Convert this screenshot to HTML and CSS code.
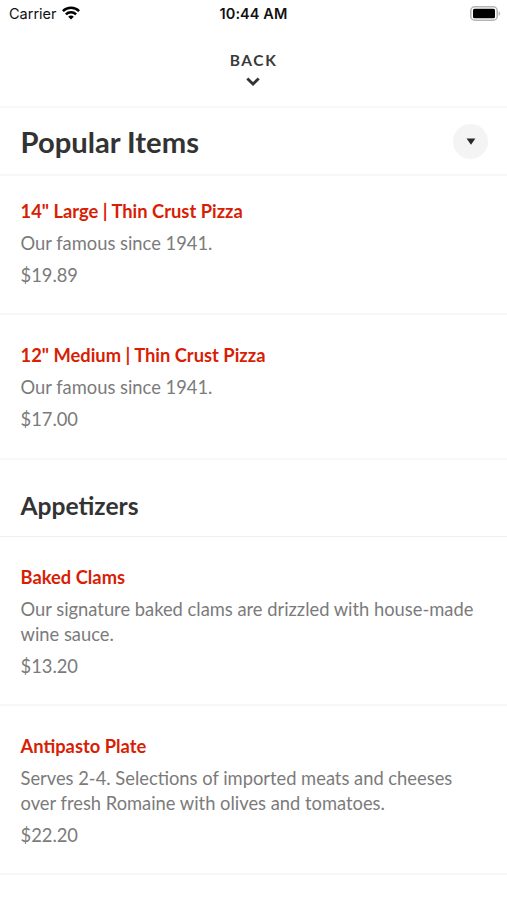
FILE: index.html
```html
<!DOCTYPE html>
<html lang="en">
<head>
    <meta charset="UTF-8">
    <meta name="viewport" content="width=device-width, initial-scale=1.0">
    <title>Menu</title>
    <link rel="stylesheet" href="styles.css">
</head>
<body>

<!-- Status Bar -->
<div class="status-bar">
    <div class="carrier">
        <span>Carrier</span>
        <svg class="wifi" width="18" height="14" viewBox="0 0 18 14">
            <g fill="none" stroke="#000" stroke-width="2.5">
                <path d="M0.9 5.2C5.4 0.7 12.6 0.7 17.1 5.2"/>
                <path d="M3.9 8.4C6.7 5.6 11.3 5.6 14.1 8.4"/>
            </g>
            <path d="M9 13.6L6.2 10.7C7.8 9.2 10.2 9.2 11.8 10.7Z"/>
        </svg>
    </div>
    <span class="time">10:44 AM</span>
    <svg class="battery" width="31" height="15" viewBox="0 0 31 15">
        <rect x="0.8" y="0.8" width="26.4" height="13.4" rx="4" fill="#fff" stroke="#b5b5b5" stroke-width="1.6"/>
        <rect x="3" y="2.8" width="22" height="9.4" rx="1.5"/>
        <path d="M28.6 5.2C30.7 6 30.7 9 28.6 9.8Z" fill="#b5b5b5"/>
    </svg>
</div>

<header>
    <a href="#" class="back">BACK
        <svg width="16" height="11" viewBox="0 0 16 11">
            <path d="M2.3 2.5L8 8L13.7 2.5" fill="none" stroke="#333" stroke-width="2.8"/>
        </svg>
    </a>
</header>

<!-- Popular Items -->
<section class="menu">
    <div class="menu-title">
        <h1>Popular Items</h1>
        <button class="toggle" aria-label="Choose a section">
            <svg width="10" height="7" viewBox="0 0 10 7">
                <path d="M0.6 0.5H9.4L5 6.7Z" fill="#292929"/>
            </svg>
        </button>
    </div>
    <div class="item first">
        <h3>14" Large | Thin Crust Pizza</h3>
        <p>Our famous since 1941.</p>
        <p>$19.89</p>
    </div>
    <div class="item">
        <h3>12" Medium | Thin Crust Pizza</h3>
        <p>Our famous since 1941.</p>
        <p>$17.00</p>
    </div>
</section>

<!-- Appetizers -->
<section class="menu">
    <h2>Appetizers</h2>
    <div class="item">
        <h3>Baked Clams</h3>
        <p>Our signature baked clams are drizzled with house-made wine sauce.</p>
        <p>$13.20</p>
    </div>
    <div class="item">
        <h3>Antipasto Plate</h3>
        <p>Serves 2-4. Selections of imported meats and cheeses over fresh Romaine with olives and tomatoes.</p>
        <p>$22.20</p>
    </div>
</section>

</body>
</html>
```

FILE: styles.css
```css
* {
    box-sizing: border-box;
}

body {
    font-family: Lato, sans-serif;
    margin: 0;
    padding: 0;
    background-color: #fff;
    color: #333;
}

h1, h2, h3, p {
    margin: 0;
}

.status-bar {
    display: grid;
    grid-template-columns: 1fr auto 1fr;
    align-items: center;
    height: 27px;
    padding: 0 6px 0 9px;
    font-family: Inter, sans-serif;
    font-size: 14.5px;
    color: #111;
}

.carrier {
    display: flex;
    align-items: center;
    gap: 5px;
}

.wifi {
    margin-top: -2px;
}

.time {
    margin-right: 3px;
    font-weight: 600;
    letter-spacing: 0.1px;
}

.battery {
    justify-self: end;
}

header {
    display: flex;
    justify-content: center;
    height: 81px;
    padding-top: 24px;
    border-bottom: 2px solid #f7f7f7;
}

.back {
    display: flex;
    flex-direction: column;
    align-items: center;
    gap: 6px;
    color: #3a3a3a;
    font-size: 15.5px;
    font-weight: bold;
    letter-spacing: 1.6px;
    line-height: 19px;
    text-decoration: none;
}

.back svg {
    margin-right: 1.6px;
}

.menu-title {
    display: flex;
    justify-content: space-between;
    align-items: center;
    height: 68px;
    padding: 1px 19px 0 20.5px;
    border-bottom: 2px solid #f7f7f7;
}

.menu-title h1 {
    font-size: 29.2px;
    font-weight: bold;
}

.toggle {
    display: flex;
    justify-content: center;
    align-items: center;
    width: 35px;
    height: 35px;
    padding: 0;
    border: none;
    border-radius: 50%;
    background-color: #f4f4f4;
    cursor: pointer;
}

.menu h2 {
    height: 77.5px;
    padding: 30.5px 20.5px 0;
    border-bottom: 1px solid #f0f0f0;
    font-size: 24.6px;
    line-height: 32px;
}

.item {
    display: flex;
    flex-direction: column;
    gap: 7.4px;
    padding: 28.4px 20.5px 25.8px;
    border-bottom: 2px solid #f7f7f7;
    font-size: 18.33px;
    line-height: 24.5px;
}

.item.first {
    padding-top: 23px;
}

.item h3 {
    color: #d81e05;
    font-size: 18.33px;
    font-weight: bold;
}

.item p {
    color: #7b7b7b;
}
```
